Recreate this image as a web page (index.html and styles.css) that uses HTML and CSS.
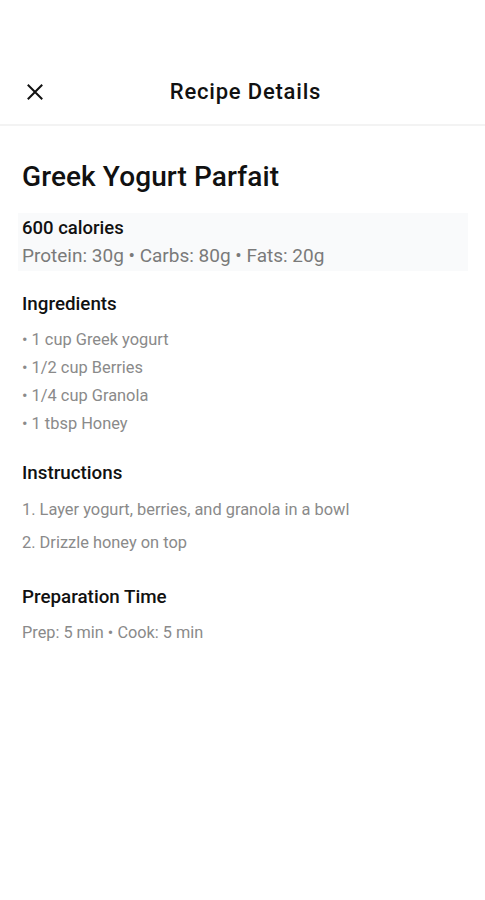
FILE: index.html
```html
<!DOCTYPE html>
<html lang="en">
<head>
<meta charset="utf-8">
<title>Recipe Details</title>
<link rel="stylesheet" href="styles.css">
</head>
<body>
<div class="screen">
  <header class="topbar">
    <button class="close" aria-label="Close">
      <svg width="16" height="16" viewBox="0 0 16 16"><path d="M1.5 1.5L14.5 14.5M14.5 1.5L1.5 14.5" stroke="#111" stroke-width="2" stroke-linecap="square" fill="none"/></svg>
    </button>
    <h1 class="topbar-title">Recipe Details</h1>
    <span class="spacer"></span>
  </header>
  <main class="content">
    <h2 class="recipe-name">Greek Yogurt Parfait</h2>
    <section class="nutrition">
      <div class="calories">600 calories</div>
      <div class="macros">Protein: 30g • Carbs: 80g • Fats: 20g</div>
    </section>
    <section class="block ingredients-block">
      <h3 class="block-title">Ingredients</h3>
      <ul class="list ingredients">
        <li>• 1 cup Greek yogurt</li>
        <li>• 1/2 cup Berries</li>
        <li>• 1/4 cup Granola</li>
        <li>• 1 tbsp Honey</li>
      </ul>
    </section>
    <section class="block instructions-block">
      <h3 class="block-title">Instructions</h3>
      <ol class="list steps">
        <li>1. Layer yogurt, berries, and granola in a bowl</li>
        <li>2. Drizzle honey on top</li>
      </ol>
    </section>
    <section class="block prep-block">
      <h3 class="block-title">Preparation Time</h3>
      <p class="prep">Prep: 5 min • Cook: 5 min</p>
    </section>
  </main>
</div>
</body>
</html>
```
FILE: styles.css
```css
* { box-sizing: border-box; }
html, body { margin: 0; padding: 0; background: #fff; }
body { font-family: Roboto, "Noto Sans", sans-serif; color: #111; }
.screen { width: 485px; min-height: 900px; padding-top: 60px; }
.topbar {
  height: 66px;
  display: flex;
  align-items: center;
  padding: 0 18px 0 20px;
  border-bottom: 2px solid #f3f3f3;
}
.close {
  width: 30px; height: 30px;
  border: 0; background: none; padding: 0;
  display: flex; align-items: center; justify-content: center;
}
.topbar-title {
  flex: 1;
  margin: 0;
  padding-left: 4px;
  text-align: center;
  font-size: 22px;
  font-weight: 500;
  line-height: 28px;
  letter-spacing: 0.8px;
}
.spacer { width: 30px; }
.content { padding: 34px 22px 0; }
.recipe-name {
  margin: 0;
  font-size: 28px;
  font-weight: 500;
  line-height: 34px;
  letter-spacing: 0.1px;
}
.nutrition {
  margin: 19px -5px 0 -4px;
  padding: 4px 5px 2px 4px;
  background: #f9fafb;
}
.calories { font-size: 18.5px; font-weight: 500; line-height: 22px; }
.macros { font-size: 19px; color: #7a7a7a; line-height: 26px; margin-top: 4px; }
.block-title { margin: 0; font-size: 18.8px; font-weight: 500; line-height: 24px; }
.ingredients-block { margin-top: 21px; }
.instructions-block { margin-top: 23px; }
.prep-block { margin-top: 26px; }
.list { list-style: none; padding: 0; color: #8a8a8a; font-size: 16.4px; }
.ingredients { margin: 10px 0 0; }
.ingredients li { line-height: 28px; }
.steps { margin: 8px 0 0; }
.steps li { line-height: 33px; }
.prep { margin: 13px 0 0; color: #8a8a8a; font-size: 16.3px; line-height: 22px; }
```
